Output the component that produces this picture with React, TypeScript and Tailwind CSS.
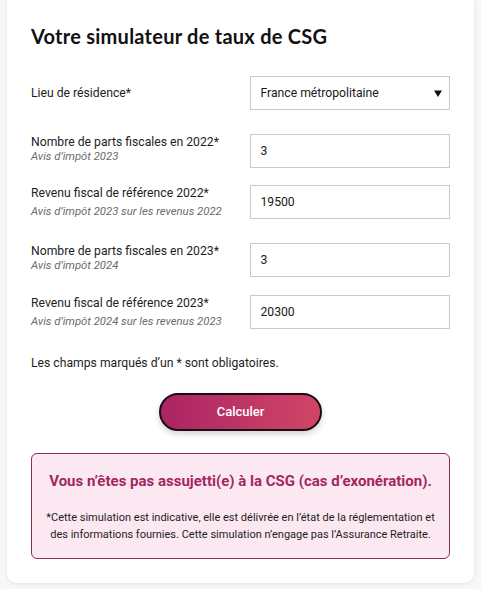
import React from "react";

function Row({
  label,
  sub,
  value,
  select,
  className,
  subGap,
  labelPad,
}: {
  label: string;
  sub?: string;
  value: string;
  select?: boolean;
  className?: string;
  subGap?: string;
  labelPad?: string;
}) {
  return (
    <div className={"flex items-center " + (className ?? "")}>
      <div className={"w-[220px] flex flex-col " + (labelPad ?? "")}>
        <span className="text-[12.2px] leading-[16px] text-[#1e1e1e]">{label}</span>
        {sub && (
          <span className={"text-[11.3px] leading-[14px] italic text-[#6b6b6b] " + (subGap ?? "")}>
            {sub}
          </span>
        )}
      </div>
      <div className="w-[200px] h-[34px] border border-[#c9c9c9] bg-white flex items-center justify-between pl-[9px] pr-[7px]">
        <span className="text-[12.2px] text-[#1a1a1a]">{value}</span>
        {select && (
          <svg width="8" height="7" viewBox="0 0 8 7">
            <path d="M0 0.5 H8 L4 7 Z" fill="#111" />
          </svg>
        )}
      </div>
    </div>
  );
}

export default function App() {
  return (
    <div
      className="min-h-[589px] w-full bg-[#f7f7f7] px-[7px]"
      style={{ fontFamily: "Roboto, 'Liberation Sans', sans-serif" }}
    >
      <div className="bg-white rounded-b-[10px] shadow-[0_1px_4px_rgba(0,0,0,0.08)] px-[24px] pb-[24px] pt-[24px] w-[467px]">
        <h1
          className="text-[20px] leading-[24px] font-bold text-[#111] tracking-[0.25px]"
          style={{ fontFamily: "Lato, 'Open Sans', sans-serif" }}
        >
          Votre simulateur de taux de CSG
        </h1>
        <Row className="mt-[28px]" label="Lieu de résidence*" value="France métropolitaine" select />
        <Row
          className="mt-[24px]"
          labelPad="pb-[4px]"
          label="Nombre de parts fiscales en 2022*"
          sub="Avis d’impôt 2023"
          value="3"
        />
        <Row
          className="mt-[17px]"
          label="Revenu fiscal de référence 2022*"
          sub="Avis d’impôt 2023 sur les revenus 2022"
          subGap="mt-[4px]"
          value="19500"
        />
        <Row
          className="mt-[24px]"
          labelPad="pb-[4px]"
          label="Nombre de parts fiscales en 2023*"
          sub="Avis d’impôt 2024"
          value="3"
        />
        <Row
          className="mt-[18px]"
          label="Revenu fiscal de référence 2023*"
          sub="Avis d’impôt 2024 sur les revenus 2023"
          subGap="mt-[4px]"
          value="20300"
        />
        <p className="mt-[26px] text-[12.2px] leading-[16px] text-[#1e1e1e]">
          Les champs marqués d’un * sont obligatoires.
        </p>
        <div className="flex justify-center mt-[22px]">
          <button className="w-[163px] h-[38px] rounded-full border-2 border-[#1c0b12] bg-gradient-to-r from-[#ab2464] to-[#d04566] text-white text-[13px] font-medium shadow-[0_3px_6px_rgba(0,0,0,0.18)]">
            Calculer
          </button>
        </div>
        <div className="mt-[22px] border border-[#8e2d60] rounded-[6px] bg-[#fbe8f1] pt-[17px] pb-[15px] px-[10px] text-center">
          <p className="text-[15px] leading-[20px] font-bold text-[#a4265f]">
            Vous n’êtes pas assujetti(e) à la CSG (cas d’exonération).
          </p>
          <p className="mt-[18px] text-[11px] leading-[17px] text-[#1e1e1e]">
            *Cette simulation est indicative, elle est délivrée en l’état de la réglementation et
            <br />
            des informations fournies. Cette simulation n’engage pas l’Assurance Retraite.
          </p>
        </div>
      </div>
    </div>
  );
}
